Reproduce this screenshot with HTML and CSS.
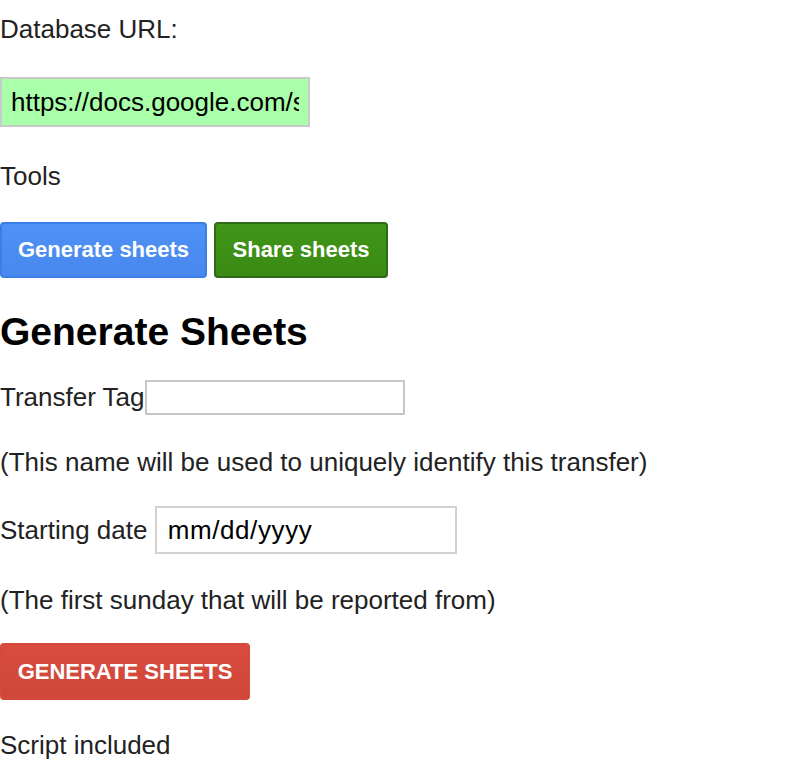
FILE: index.html
```html
<!DOCTYPE html>
<html>
<head>
<meta charset="utf-8">
<link rel="stylesheet" href="styles.css">
</head>
<body>
<div class="page">
  <p class="line first">Database URL:</p>
  <input class="url-input" type="text" value="https://docs.google.com/spreadsheets/d/1abc">
  <p class="line tools">Tools</p>
  <div class="toolbar">
    <button class="btn btn-blue">Generate sheets</button>
    <button class="btn btn-green">Share sheets</button>
  </div>
  <h2 class="title">Generate Sheets</h2>
  <p class="line tag-row">Transfer Tag<input class="tag-input" type="text"></p>
  <p class="line note-1">(This name will be used to uniquely identify this transfer)</p>
  <p class="line date-row">Starting date <input class="date-input" type="text" value="mm/dd/yyyy"></p>
  <p class="line note-2">(The first sunday that will be reported from)</p>
  <button class="btn btn-red">GENERATE SHEETS</button>
  <p class="line script">Script included</p>
</div>
</body>
</html>
```
FILE: styles.css
```css
html, body {
  margin: 0;
  padding: 0;
  background: #fff;
}
body {
  font-family: "Liberation Sans", Arial, sans-serif;
  font-size: 26px;
  color: #222;
}
.page {
  display: flex;
  flex-direction: column;
  align-items: flex-start;
}
.line {
  margin: 0;
  line-height: 30px;
}
.first { margin-top: 14px; }
.url-input {
  display: block;
  box-sizing: border-box;
  margin: 33px 0 0 0;
  width: 310px;
  height: 50px;
  padding: 0 9px;
  border: 2px solid #c9c9c9;
  background: #aaffaa;
  font-family: "Liberation Sans", Arial, sans-serif;
  font-size: 26px;
  color: #000;
  outline: none;
}
.tools { margin-top: 34px; }
.toolbar {
  display: flex;
  gap: 7px;
  margin-top: 31px;
}
.btn {
  box-sizing: border-box;
  height: 56px;
  padding: 0;
  border-radius: 4px;
  border: 2px solid transparent;
  font-family: "Liberation Sans", Arial, sans-serif;
  font-size: 22px;
  font-weight: bold;
  color: #fff;
  white-space: nowrap;
  text-align: center;
  cursor: pointer;
}
.btn-blue {
  width: 207px;
  background: linear-gradient(#4f91f6, #4888ee);
  border-color: #3a7fe8;
}
.btn-green {
  width: 174px;
  background: linear-gradient(#419519, #3a8a14);
  border-color: #2e6a17;
}
.btn-red {
  width: 250px;
  height: 57px;
  margin-top: 28px;
  background: linear-gradient(#d84c3f, #cf473a);
  border-color: #d34a3c;
}
.title {
  margin: 31px 0 0 0;
  font-size: 39px;
  line-height: 45px;
  font-weight: bold;
  color: #000;
}
.tag-row { margin-top: 26px; }
.tag-input {
  box-sizing: border-box;
  width: 260px;
  height: 35px;
  margin: 0;
  padding: 0;
  border: 2px solid #c6c6c6;
  font-family: "Liberation Sans", Arial, sans-serif;
  font-size: 26px;
  vertical-align: baseline;
  outline: none;
}
.note-1 { margin-top: 32px; }
.date-row { margin-top: 29px; }
.date-input {
  box-sizing: border-box;
  width: 302px;
  height: 48px;
  margin: 0;
  padding: 0 11px;
  border: 2px solid #d2d2d2;
  font-family: "Liberation Sans", Arial, sans-serif;
  font-size: 26px;
  letter-spacing: 0.6px;
  color: #000;
  vertical-align: baseline;
  outline: none;
}
.note-2 { margin-top: 31px; }
.script { margin-top: 30px; }
```
